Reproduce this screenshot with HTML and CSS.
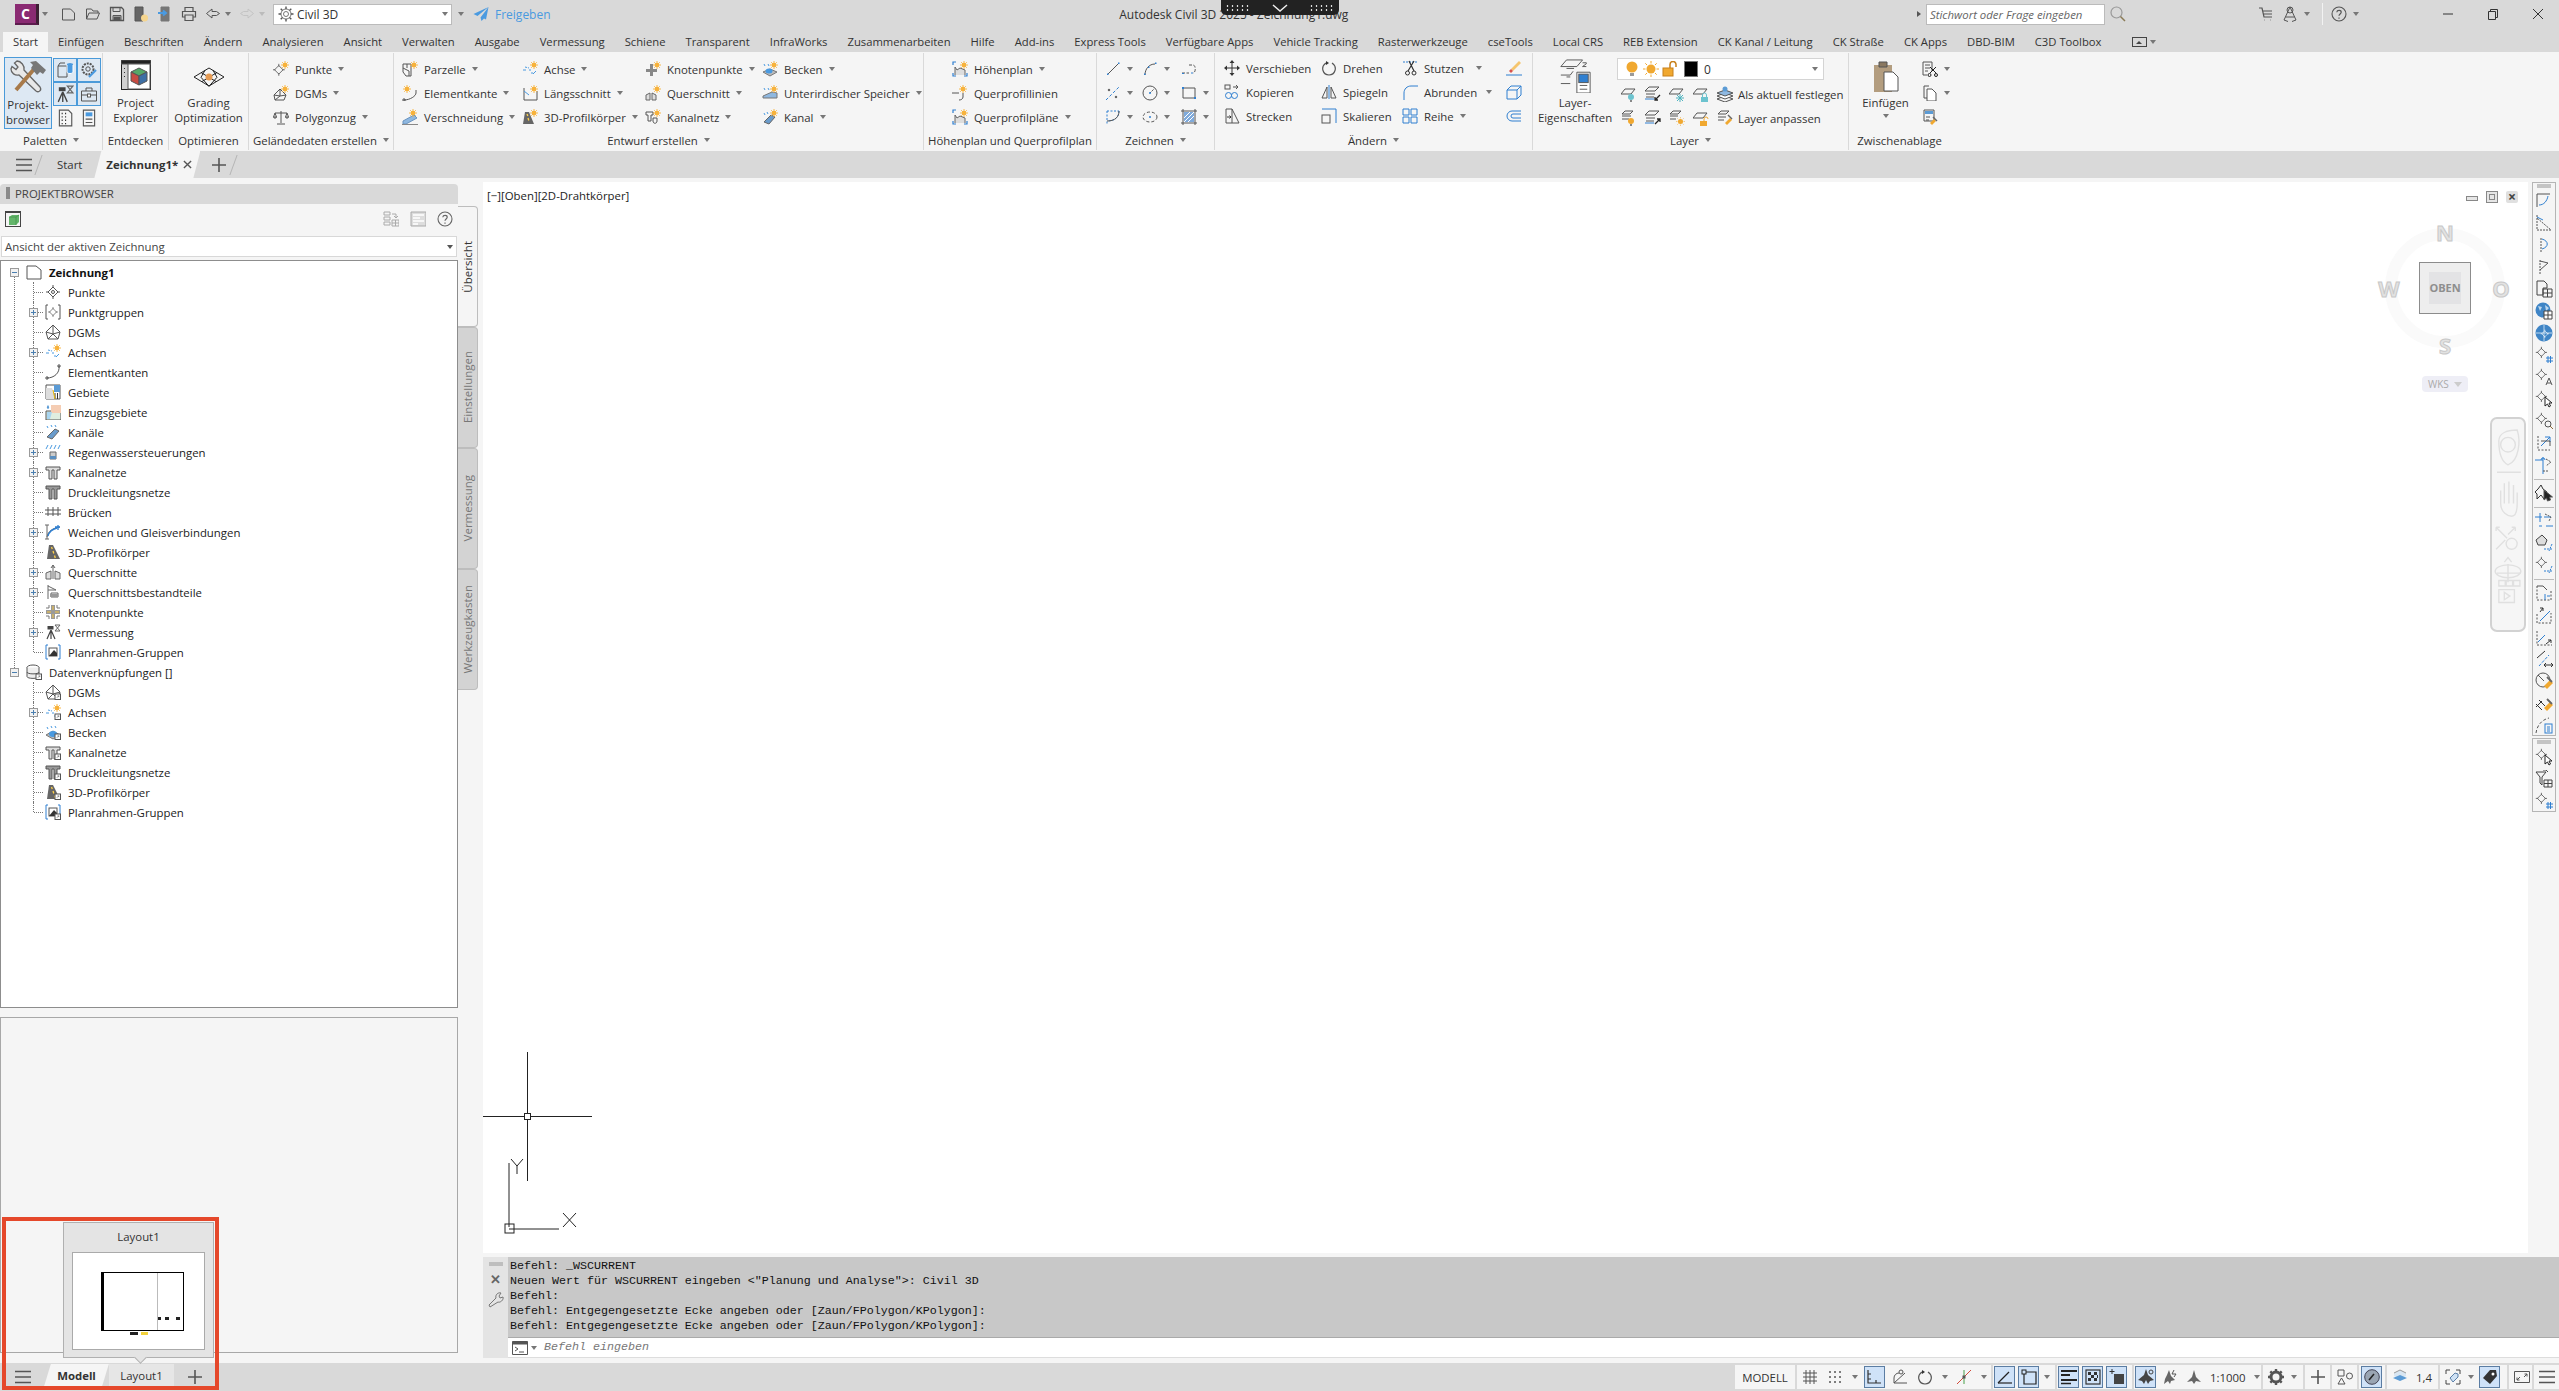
FILE: index.html
```html
<!DOCTYPE html>
<html lang="de">
<head>
    <meta charset="UTF-8">
    <title>Autodesk Civil 3D</title>
    <link rel="stylesheet" href="styles.css">
</head>
<body>
<svg class="sprite" xmlns="http://www.w3.org/2000/svg">
  <defs>
    <g id="st"><circle cx="12" cy="4" r="2.2" fill="#f7b23b" stroke="none"/><path d="M12 0v8M8 4h8M9.2 1.2l5.6 5.6M14.8 1.2l-5.6 5.6" stroke="#f7b23b" stroke-width=".9"/></g>
    <g id="lk"><rect x="10" y="10" width="5.5" height="5.5" fill="#fff" stroke="#555"/><path d="M11.8 13.8l2-2M12.5 11.8h1.3v1.3" stroke="#555" stroke-width=".6"/></g>
    <path id="tgt" d="M8 1v3M8 12v3M1 8h3M12 8h3M8 3l5 5-5 5-5-5z"/>
    <symbol id="new" viewBox="0 0 16 16"><path d="M1.5 3h8l4 4v7h-12z"/></symbol>
    <symbol id="open" viewBox="0 0 16 16"><path d="M1.5 13V3h5l1.5 2h5v2M1.5 13l2.5-6h10.5l-2.5 6z"/></symbol>
    <symbol id="save" viewBox="0 0 16 16"><path d="M1.5 1.5h11l2 2v11h-13z" stroke-width="1.3"/><path d="M4 1.5v4h7v-4M4 14.5v-5h8v5"/><rect x="5" y="11" width="6" height="3.5" fill="#555"/></symbol>
    <symbol id="saveas" viewBox="0 0 16 16"><path d="M2 1h8v14H2z" fill="#666"/><circle cx="11.5" cy="12" r="3.5" fill="#f5d58e" stroke="none"/></symbol>
    <symbol id="recv" viewBox="0 0 16 16"><path d="M4 1h8v14H4z" fill="#777" stroke="#777"/><path d="M1 7h7M6 4.5L9 7 6 9.5" stroke="#4a9ae0" stroke-width="2"/></symbol>
    <symbol id="print" viewBox="0 0 16 16"><path d="M4 5V1.5h8V5M4 11H1.5V5.5h13V11H12M4 9h8v5.5H4z" stroke-width="1.2"/></symbol>
    <symbol id="undo" viewBox="0 0 16 16"><path d="M7 3L1.5 7.5 7 12V9.5h4.5l3-2-3-2H7z"/></symbol>
    <symbol id="redo" viewBox="0 0 16 16"><path d="M9 3l5.5 4.5L9 12V9.5H4.5l-3-2 3-2H9z" stroke="#c4c4c4"/></symbol>
    <symbol id="gear" viewBox="0 0 16 16"><circle cx="8" cy="8" r="2.5"/><circle cx="8" cy="8" r="5"/><path d="M8 .5V3M8 13v2.5M.5 8H3M13 8h2.5M2.7 2.7l1.8 1.8M11.5 11.5l1.8 1.8M2.7 13.3l1.8-1.8M11.5 4.5l1.8-1.8" stroke-width="1.4"/></symbol>
    <symbol id="send" viewBox="0 0 16 16"><path d="M15.5 1L.5 8l4 2 11-9-8 10.5 1 3.5 2.5-2.5 2 1z" fill="#4a9ae0" stroke="none"/></symbol>
    <symbol id="search" viewBox="0 0 16 16"><circle cx="6.5" cy="6.5" r="5.5" stroke="#999" stroke-width="1.2"/><path d="M10.5 10.5l4.5 4.5" stroke="#8a7a55" stroke-width="1.5"/></symbol>
    <symbol id="cart" viewBox="0 0 16 16"><path d="M1 2h3l2 9h8M5 5h9M5.5 8h8.5M6 14h.5M12 14h.5" stroke-width="1.2"/></symbol>
    <symbol id="user" viewBox="0 0 16 16"><circle cx="8" cy="4" r="3"/><path d="M8 1L2 14l4 1.5M8 1l6 13-4 1.5M3.5 11h9"/></symbol>
    <symbol id="help" viewBox="0 0 16 16"><circle cx="8" cy="8" r="7" stroke-width="1.1"/><path d="M5.8 6.2C6 3.8 10.2 3.8 10.2 6.2c0 1.7-2.2 1.8-2.2 3.6M8 11.5v1.3" stroke-width="1.2"/></symbol>
    <symbol id="hammer" viewBox="0 0 36 36"><path d="M7 2l-2.5 2 3.5 4-2 2.5-4-3L1 10c0 4 4 7 8 6l17 16c3 2 6-1 4-4L14 11C15 7 11 2 7 2z" fill="#e8e8e8" stroke="#666" stroke-width="1.3"/><path d="M6 31L25 9" stroke="#a87a4a" stroke-width="4"/><path d="M20 3l6-1 10 9-3 4-3-2-3 3-6-7 2-3z" fill="#777" stroke="none"/></symbol>
    <symbol id="dbsheet" viewBox="0 0 18 18"><path d="M2 5h9v11H2zM2 5l2-3h5" stroke="#555"/><ellipse cx="14" cy="3.5" rx="3" ry="1.5" fill="#4a9ae0" stroke="none"/><path d="M11 4v7c0 2 6 2 6 0V4" fill="#4a9ae0" stroke="#fff"/></symbol>
    <symbol id="gearw" viewBox="0 0 18 18"><circle cx="8" cy="8" r="5.5" stroke="#555" stroke-dasharray="2 1" stroke-width="2"/><circle cx="8" cy="8" r="2.2" stroke="#555"/><path d="M9 16l7-7" stroke="#4a9ae0" stroke-width="2.2"/></symbol>
    <symbol id="survey" viewBox="0 0 16 16"><path d="M6 6l-4 9M6 6v9M6 6l4 9" stroke="#444" stroke-width="1.2"/><rect x="2.5" y="2" width="6" height="3.5" fill="#444" stroke="none"/><path d="M10 1h5l-5 6h5z" stroke="#666"/></symbol>
    <symbol id="toolbox" viewBox="0 0 18 18"><path d="M1.5 6h15v10h-15zM6 6V3h6v3M1.5 10h15"/><rect x="7.5" y="9" width="3" height="3" fill="#fff" stroke="#555"/></symbol>
    <symbol id="calcs" viewBox="0 0 16 16"><path d="M3 1h8l3 3v11H3z"/><path d="M5 4h1M8 4h1M5 7h1M8 7h1M5 10h1M8 10h1M5 13h1M8 13h1" stroke="#333" stroke-width="1.3"/></symbol>
    <symbol id="propsm" viewBox="0 0 16 16"><path d="M3 1h10v14H3z"/><rect x="5" y="3" width="6" height="3.5" fill="#4a9ae0" stroke="none"/><path d="M5 9h6M5 12h6"/></symbol>
    <symbol id="explorer" viewBox="0 0 30 30"><rect x=".5" y=".5" width="29" height="29" fill="#d0d0d0" stroke="#222"/><rect x="0" y="0" width="30" height="4" fill="#222"/><rect x="7" y="4" width="22" height="25" fill="#fff"/><path d="M18 8l8 4-8 4-8-4z" fill="#55a868"/><path d="M10 12l8 4v9l-8-4z" fill="#c84b42"/><path d="M26 12l-8 4v9l8-4z" fill="#3d6fa5"/><path d="M3.5 8v1M3.5 12v1M3.5 16v1" stroke="#333"/></symbol>
    <symbol id="grading" viewBox="0 0 32 20"><path d="M16 1l15 9-15 9L1 10zM8 5.5l15 9M24 5.5l-15 9M12 3.3l-4 7 8 9M20 3.3l4 7-8 9" stroke="#222"/><circle cx="16" cy="10" r="3.5" fill="#e59a52" stroke="none"/></symbol>
    <symbol id="greenbox" viewBox="0 0 16 16"><rect x=".5" y=".5" width="15" height="15" fill="#f5f5f5" stroke="#444"/><path d="M.5 1h15" stroke="#444" stroke-width="2"/><path d="M4 6l3-2h7v7l-3 3H4z" fill="#63b56a" stroke="none"/><path d="M4 6h7v8M11 6l3-2" stroke="#3f8f48" stroke-width=".7"/></symbol>
    <symbol id="punkte" viewBox="0 0 16 16"><use href="#tgt"/><circle cx="8" cy="8" r="1.5"/></symbol>
    <symbol id="punktnew" viewBox="0 0 16 16"><use href="#tgt" transform="translate(-1 2) scale(.85)"/><use href="#st"/></symbol>
    <symbol id="ptgroup" viewBox="0 0 16 16"><path d="M3 1H1v14h2M13 1h2v14h-2"/><use href="#tgt" transform="translate(2.4 2.4) scale(.7)"/></symbol>
    <symbol id="dgm" viewBox="0 0 16 16"><path d="M8 1l7 7-2 7H3L1 8zM1 8l7 2 7-2M8 1v9l-5 5M8 10l5 5"/></symbol>
    <symbol id="dgmnew" viewBox="0 0 16 16"><path d="M7 4l6 6-2 5H2L1 10zM1 10l6 1 6-1M7 4v7l-5 4"/><use href="#st"/></symbol>
    <symbol id="scale" viewBox="0 0 16 16"><path d="M8 2v12M4 15h8M2 4h12M2 4L.5 8h3zM14 4l-1.5 4h3zM.5 8c0 1.5 3 1.5 3 0M12.5 8c0 1.5 3 1.5 3 0"/></symbol>
    <symbol id="parzelle" viewBox="0 0 16 16"><path d="M1 3h8v12H4L1 11zM1 7l6 3v5M5 3v4"/><use href="#st"/></symbol>
    <symbol id="achse" viewBox="0 0 16 16"><path d="M1 9h3M7 9h2M11 13l3-3" stroke="#4a9ae0"/><path d="M3 6l4 1M9 12h2" stroke="#4a9ae0" stroke-dasharray="2 1"/><use href="#st"/></symbol>
    <symbol id="ekante" viewBox="0 0 16 16"><path d="M14 2c1 7-5 12-12 12M14 0v4M0 14h4M2 12v4M12 2h4"/></symbol>
    <symbol id="ekantenew" viewBox="0 0 16 16"><path d="M14 8c0 3-6 7-12 7M0 15h4M2 13v3M14 8V5"/><use href="#st" transform="translate(-7 0)"/></symbol>
    <symbol id="lschnitt" viewBox="0 0 16 16"><path d="M2 3v12h13V6" stroke="#555"/><path d="M2 6l5 4" stroke="#4a9ae0"/><use href="#st"/></symbol>
    <symbol id="versch" viewBox="0 0 16 16"><path d="M1 12l11-6 3 3L4 15H1z" fill="#8fb8e0" stroke="#6a94c0"/><path d="M0 15.5h16" stroke="#888"/><use href="#st" transform="translate(-1 0)"/></symbol>
    <symbol id="road" viewBox="0 0 16 16"><path d="M4 1h4l7 14H2z" fill="#666" stroke="none"/><path d="M6.5 3l.8 2M8 7l.8 2.5M9.5 11.5l.8 2.5" stroke="#ffd24a" stroke-width="1.3"/></symbol>
    <symbol id="roadnew" viewBox="0 0 16 16"><path d="M3 3h4l5 12H1z" fill="#666" stroke="none"/><path d="M5 5l.8 2M6 9l.8 2.5" stroke="#ffd24a" stroke-width="1.3"/><use href="#st"/></symbol>
    <symbol id="knoten" viewBox="0 0 16 16"><path d="M6 1v5H1v4h5v5h4v-5h5V6h-5V1z" fill="#999" stroke="none"/><path d="M8 2v4M8 10v4M2 8h4M10 8h4" stroke="#f5c542"/><path d="M1 4h3M12 4h3M1 12h3M12 12h3M4 1v3M12 1v3M4 12v3M12 12v3" stroke="#777"/></symbol>
    <symbol id="knotennew" viewBox="0 0 16 16"><path d="M5 3v5H1v3h4v4h3v-4h4V8H8V3z" fill="#888" stroke="none"/><use href="#st"/></symbol>
    <symbol id="quers" viewBox="0 0 16 16"><path d="M1 9l5-2v8H1zM15 9l-5-2v8h5zM6 4l2-3 2 3M8 1v14" fill="#ddd" stroke="#666"/></symbol>
    <symbol id="quersnew" viewBox="0 0 16 16"><path d="M1 10l4-2v7H1zM11 10l-4-2v7h4z" fill="#ddd" stroke="#666"/><use href="#st"/></symbol>
    <symbol id="querb" viewBox="0 0 16 16"><path d="M3 1v14M3 2l8 4H3M6 9h7v4H6z" stroke="#666"/><rect x="5" y="10" width="8" height="3" fill="#999" stroke="none"/></symbol>
    <symbol id="netz" viewBox="0 0 16 16"><path d="M1 3h14v3h-3v9H9V6H7v9H4V6H1z" stroke="#555" fill="#ddd"/></symbol>
    <symbol id="netzdk" viewBox="0 0 16 16"><path d="M1 2h14v3h-3v10H9V5H7v10H4V5H1z" stroke="#555" fill="#999"/></symbol>
    <symbol id="netznew" viewBox="0 0 16 16"><path d="M1 3h7v3H6v6H3V6H1zM8 9h4v3c0 3-4 3-4 0z" stroke="#555"/><use href="#st"/></symbol>
    <symbol id="becken" viewBox="0 0 16 16"><path d="M1 11l7-4 7 4-7 4z" fill="#bbb" stroke="#777"/><ellipse cx="8" cy="10" rx="4" ry="3" fill="#4a9ae0" stroke="none"/><path d="M2 3l1 2M6 2l1 2M10 2l1 2" stroke="#4a9ae0"/></symbol>
    <symbol id="beckennew" viewBox="0 0 16 16"><path d="M1 11l7-3 7 3-7 4z" fill="#bbb" stroke="#777"/><ellipse cx="7" cy="10" rx="3.5" ry="2.5" fill="#4a9ae0" stroke="none"/><path d="M2 3l1 2M6 3l1 2" stroke="#4a9ae0"/><use href="#st"/></symbol>
    <symbol id="speicher" viewBox="0 0 16 16"><path d="M1 11l9-4 5 1v5H1z" fill="#8fb8e0" stroke="#777"/><path d="M2 3l1 2M6 3l1 2" stroke="#4a9ae0"/><use href="#st"/></symbol>
    <symbol id="kanal" viewBox="0 0 16 16"><path d="M2 13l8-8 4 2-7 8z" fill="#6a9ccc" stroke="#666"/><path d="M2 2l1 2M6 1l1 2M10 1l1 2" stroke="#4a9ae0"/></symbol>
    <symbol id="kanalnew" viewBox="0 0 16 16"><path d="M2 13l7-7 4 2-6 7z" fill="#6a9ccc" stroke="#666"/><path d="M2 4l1 2M5 3l1 2" stroke="#4a9ae0"/><use href="#st"/></symbol>
    <symbol id="gebiet" viewBox="0 0 16 16"><path d="M1 1h14v14H1z" stroke="#555"/><path d="M9 1h6v7H9z" fill="#5b9bd5" stroke="none"/><path d="M1 4h6l4 11H1z" fill="#ddd" stroke="none"/><path d="M10 9v6M12.5 9v6" stroke="#333"/><path d="M8 6l2 9" stroke="#e6b800"/></symbol>
    <symbol id="einzug" viewBox="0 0 16 16"><path d="M1 7h15v9H1z" fill="#dfeee0"/><path d="M6 1h10v8H6z" fill="#f5cdb3" stroke="none"/><path d="M3 1c-4 5 4 5 0 0z" fill="#5b9bd5" stroke="none"/><path d="M2 8h5l-2 7H2z" fill="#a8d5f0" stroke="none"/></symbol>
    <symbol id="regen" viewBox="0 0 16 16"><path d="M2 3L1 5M6 3L5 5M10 3L9 5M14 3l-1 2M3 1L2 3M7 1L6 3M11 1l-1 2M15 1l-1 2" stroke="#4a9ae0"/><path d="M5 8h6v7H5z" fill="#ccc" stroke="#666"/><path d="M5 12h6v3H5z" fill="#5b8fc0" stroke="none"/></symbol>
    <symbol id="bruecke" viewBox="0 0 16 16"><path d="M0 6h16M0 10h16M3 3v9M8 3v9M13 3v9" stroke="#555"/></symbol>
    <symbol id="weiche" viewBox="0 0 16 16"><path d="M2 1v14M0 15h4M0 1h4M2 13C3 7 8 4 15 3" stroke="#666"/><path d="M3 12c1-4 5-7 9-8M13 1v5M10 3h5" stroke="#2f7fd0" stroke-width="1.3"/></symbol>
    <symbol id="plan" viewBox="0 0 16 16"><path d="M3 1H1v14h2M13 1h2v14h-2" stroke="#2f7fd0"/><rect x="4" y="4" width="8" height="8" stroke="#555"/><path d="M4 12l5-6 3 3v3z" fill="#333" stroke="none"/></symbol>
    <symbol id="doc" viewBox="0 0 16 16"><path d="M1 2h9l5 4v9H1z" fill="#fff" stroke="#555"/></symbol>
    <symbol id="db" viewBox="0 0 16 16"><ellipse cx="7" cy="3.5" rx="6" ry="2.5" fill="#fff"/><path d="M1 3.5v9c0 2.5 12 2.5 12 0v-9M1 8c0 2.5 12 2.5 12 0" fill="#eee"/><use href="#lk"/></symbol>
    <symbol id="hoehe" viewBox="0 0 16 16"><path d="M1 4V1h3M15 12v3h-3M4 15H1v-3" stroke="#2f7fd0" stroke-width="1.2"/><path d="M3 14V6l2 3 3-2 5 2v5" fill="#ddd" stroke="#666"/><use href="#st"/></symbol>
    <symbol id="qlinie" viewBox="0 0 16 16"><path d="M0 8h7M11 8v4c0 2-2 3-4 3" stroke="#555"/><use href="#st" transform="translate(-1 0)"/></symbol>
    <symbol id="line" viewBox="0 0 16 16"><path d="M3 13L13 3" stroke="#555"/><path d="M2 14h1.5v-1.5H2zM13 3h1.5V1.5H13z" fill="#2f7fd0" stroke="none"/></symbol>
    <symbol id="arc" viewBox="0 0 16 16"><path d="M3 14C3 8 7 3 13 3" stroke="#555"/><path d="M2 14h1.5v-1.5H2zM13 3h1.5V1.5H13zM6 7h1.5V5.5H6z" fill="#2f7fd0" stroke="none"/></symbol>
    <symbol id="dash" viewBox="0 0 16 16"><path d="M1 12h7M8 4h4c3 0 3 8 0 8" stroke="#555" stroke-dasharray="3 1.5"/><path d="M1 12.5h2M10 12h2" stroke="#2f7fd0"/></symbol>
    <symbol id="dline" viewBox="0 0 16 16"><path d="M1 15L15 1" stroke="#2f7fd0" stroke-dasharray="3 2"/><circle cx="4" cy="5" r=".8" fill="#555"/><circle cx="11" cy="12" r=".8" fill="#555"/></symbol>
    <symbol id="circle" viewBox="0 0 16 16"><circle cx="8" cy="8" r="7" stroke="#555"/><path d="M8 8l4-4" stroke="#555" stroke-dasharray="2 1"/><circle cx="8" cy="8" r="1" fill="#2f7fd0" stroke="none"/></symbol>
    <symbol id="rect" viewBox="0 0 16 16"><path d="M2 3h12v10H2z" stroke="#555"/><path d="M1 2h2v2H1zM13 12h2v2h-2z" fill="#2f7fd0" stroke="none"/></symbol>
    <symbol id="fspline" viewBox="0 0 16 16"><path d="M2 2h12M2 2v13M14 2c0 6-4 10-12 10" stroke="#2f7fd0" stroke-dasharray="2 1.5"/><path d="M14 2c0 6-4 10-12 10" stroke="#555"/></symbol>
    <symbol id="ell" viewBox="0 0 16 16"><ellipse cx="8" cy="8" rx="7" ry="5" stroke="#555" stroke-dasharray="3 2"/><circle cx="8" cy="8" r="1" fill="#2f7fd0" stroke="none"/></symbol>
    <symbol id="hatch" viewBox="0 0 16 16"><path d="M2 0v16M14 0v16M0 2h16M0 14h16" stroke="#555"/><path d="M3 3h10v10H3z" fill="#7faadb" stroke="none"/><path d="M3 9l6-6M3 13L13 3M7 13l6-6" stroke="#fff"/></symbol>
    <symbol id="move" viewBox="0 0 16 16"><path d="M8 0l2.5 3h-5zM8 16l2.5-3h-5zM0 8l3-2.5v5zM16 8l-3-2.5v5zM3 7.5h10v1H3zM7.5 3h1v10h-1z" fill="#333" stroke="none"/></symbol>
    <symbol id="copy" viewBox="0 0 16 16"><rect x="1" y="1" width="5" height="4" stroke="#555"/><path d="M9 3h5M12 1l2 2-2 2" stroke="#555"/><circle cx="4.5" cy="11.5" r="3" stroke="#2f7fd0"/><circle cx="10.5" cy="11.5" r="3" stroke="#2f7fd0"/></symbol>
    <symbol id="stretch" viewBox="0 0 16 16"><path d="M2 1v14h6V1zM8 1l7 14H8" stroke="#555"/><path d="M3 9h4M5.5 7.5L7 9l-1.500 1.500" stroke="#333"/></symbol>
    <symbol id="rot" viewBox="0 0 16 16"><path d="M5 3C-1 7 2 15 8 15s9-8 3-12" stroke="#555" stroke-width="1.2"/><path d="M5 1v4l3-2z" fill="#333" stroke="none"/></symbol>
    <symbol id="mirror" viewBox="0 0 16 16"><path d="M6 3L1 14h5zM10 3l5 11h-5z" stroke="#555"/><path d="M8 1v14" stroke="#2f7fd0"/></symbol>
    <symbol id="scl" viewBox="0 0 16 16"><path d="M1 1h14v14" stroke="#2f7fd0"/><rect x="1" y="7" width="8" height="8" stroke="#555"/></symbol>
    <symbol id="trim" viewBox="0 0 16 16"><path d="M1 2h14" stroke="#2f7fd0" stroke-dasharray="2 1"/><path d="M7 1l5 10M12 1L6 11" stroke="#333" stroke-width="1.2"/><circle cx="5.5" cy="13" r="2" stroke="#333"/><circle cx="12" cy="13" r="2" stroke="#333"/></symbol>
    <symbol id="fillet" viewBox="0 0 16 16"><path d="M2 16V9c0-4 3-7 7-7h7" stroke="#2f7fd0"/></symbol>
    <symbol id="array" viewBox="0 0 16 16"><path d="M1 1h6v6H1zM9 1h6v6H9zM1 9h6v6H1zM9 9h6v6H9z" stroke="#2f7fd0"/></symbol>
    <symbol id="erase" viewBox="0 0 16 16"><path d="M5 9l8-8 2 2-8 8z" fill="#f5c56e" stroke="none"/><path d="M3 11l2-2 2 2-2 2z" fill="#d9534f" stroke="none"/><path d="M0 15h16" stroke="#2f7fd0"/></symbol>
    <symbol id="box3d" viewBox="0 0 16 16"><path d="M1 6h10v9H1zM1 6l4-4h10v9l-4 4M11 6l4-4" stroke="#2f7fd0"/></symbol>
    <symbol id="offset" viewBox="0 0 16 16"><path d="M15 3H6a5 5 0 000 10h9M15 6H7a2 2 0 000 4h8" stroke="#2f7fd0"/></symbol>
    <symbol id="layers" viewBox="0 0 36 36"><path d="M9 1h17l-6 7H3zM9 10h8M3 17h10l3-4M9 19h4M3 26h10" stroke="#555"/><path d="M20 14h14v22H20z" fill="#fff" stroke="#555"/><rect x="22" y="16" width="10" height="9" fill="#2f7fd0"/><path d="M23 28h8M23 32h8" stroke="#555"/><path d="M26 4h4v1l-4 3h4" stroke="#555"/></symbol>
    <symbol id="paste" viewBox="0 0 26 32"><path d="M1 5h18v27H1z" fill="#b39d7f" stroke="none"/><path d="M6 2h8v5H6z" fill="#8a7860"/><path d="M11 12h9l5 5v14H11z" fill="#fff" stroke="#555"/></symbol>
    <symbol id="bulb" viewBox="0 0 16 16"><circle cx="8" cy="6" r="5.5" fill="#f0a830" stroke="none"/><path d="M6 12h4v3H6z" fill="#9a9a9a" stroke="none"/></symbol>
    <symbol id="sun" viewBox="0 0 16 16"><circle cx="8" cy="8" r="4.5" fill="#f0a830" stroke="none"/><path d="M8 0v2.5M8 13.5V16M0 8h2.5M13.5 8H16M2.3 2.3L4 4M12 12l1.700 1.700M2.300 13.700L4 12M12 4l1.700-1.700" stroke="#f0a830"/></symbol>
    <symbol id="unlock" viewBox="0 0 16 16"><rect x="1" y="7" width="10" height="8" fill="#f0a830" stroke="#c8801a"/><path d="M8 7V3.500a3 3 0 016 0V6" stroke="#c8801a" stroke-width="1.5"/></symbol>
    <symbol id="lay1" viewBox="0 0 16 16"><path d="M4 3h10l-4 5H0z" stroke="#555"/><circle cx="10" cy="11" r="3" fill="#6cc3cf" stroke="none"/><path d="M9 14h2v2H9z" fill="#888" stroke="none"/></symbol>
    <symbol id="lay2" viewBox="0 0 16 16"><path d="M4 1h10l-4 4H0zM1 8h9M1 11h8" stroke="#555"/><path d="M0 13h9" stroke="#2f7fd0"/><path d="M15 9l-5 5M10 11v3h3" stroke="#222" stroke-width="1.3"/></symbol>
    <symbol id="lay3" viewBox="0 0 16 16"><path d="M4 3h10l-4 5H0z" stroke="#555"/><path d="M11 8v8M7 12h8M8 9l6 6M14 9l-6 6" stroke="#4fb3bf"/></symbol>
    <symbol id="lay4" viewBox="0 0 16 16"><path d="M4 3h10l-4 5H0z" stroke="#555"/><rect x="8" y="11" width="7" height="5" fill="#6cc3cf" stroke="none"/><path d="M9.5 11V9a2 2 0 014 0v2" stroke="#6cc3cf"/></symbol>
    <symbol id="lay5" viewBox="0 0 16 16"><path d="M0 13l8-3 8 3-8 3z" stroke="#555"/><path d="M0 10l8-3 8 3-8 3z" fill="#fff" stroke="#555"/><path d="M0 7l8-3 8 3-8 3z" fill="#8fb8e0" stroke="#555"/><circle cx="8" cy="3" r="2.5" fill="#5b9bd5" stroke="none"/></symbol>
    <symbol id="lay6" viewBox="0 0 16 16"><path d="M4 1h8L9 4H1zM1 6h9M1 9h7" stroke="#555"/><circle cx="10" cy="11" r="3" fill="#f0a830" stroke="none"/><path d="M9 14h2v2H9z" fill="#888" stroke="none"/></symbol>
    <symbol id="lay7" viewBox="0 0 16 16"><path d="M4 1h10l-4 4H0zM1 8h9M1 11h8" stroke="#555"/><path d="M0 13h9" stroke="#2f7fd0"/><path d="M10 14l5-5M12 9h3v3" stroke="#222" stroke-width="1.3"/></symbol>
    <symbol id="lay8" viewBox="0 0 16 16"><path d="M4 1h8L9 4H1zM1 6h8M1 9h6" stroke="#555"/><use href="#sun" x="7" y="7" width="9" height="9"/></symbol>
    <symbol id="lay9" viewBox="0 0 16 16"><path d="M4 3h10l-4 5H0z" stroke="#555"/><rect x="7" y="11" width="7" height="5" fill="#f0a830" stroke="none"/><path d="M11 11V9a2 2 0 014 0" stroke="#f0a830"/></symbol>
    <symbol id="lay10" viewBox="0 0 16 16"><path d="M4 1h8L9 4H1zM1 7h8M1 10h6" stroke="#555"/><path d="M8 13l5-5 2 2-5 5z" fill="#f0a830" stroke="none"/><path d="M11 5l4 4" stroke="#666" stroke-width="1.5"/></symbol>
    <symbol id="cut" viewBox="0 0 16 16"><path d="M1 1h9v9M3 4h5M3 7h5M3 10h3M1 1v13h4" stroke="#555"/><path d="M8 6l6 6M14 6l-6 6" stroke="#222"/><circle cx="7.5" cy="14" r="1.5" stroke="#222"/><circle cx="14" cy="14" r="1.5" stroke="#222"/></symbol>
    <symbol id="pcopy" viewBox="0 0 16 16"><path d="M7 1H2v12h3" stroke="#555"/><path d="M5 4h5l4 4v8H5z" fill="#fff" stroke="#555"/></symbol>
    <symbol id="pprop" viewBox="0 0 16 16"><path d="M2 1h10v11H2z" stroke="#555"/><rect x="3" y="2" width="8" height="3" fill="#5b9bd5" stroke="none"/><path d="M4 8h4M4 11h3" stroke="#555"/><path d="M8 14l4-4 2 2-4 4z" fill="#f0a830" stroke="none"/><path d="M11 8l4 4" stroke="#666" stroke-width="1.5"/></symbol>
    <symbol id="mgr" viewBox="0 0 16 16"><path d="M1 1h6v3H1zM1 6h6v3H1zM1 11h6v3H1z"/><path d="M9 3h4v4M11 5l2 2 2-2"/><path d="M9 9h7v6H9zM12.5 9v6M9 12h7"/></symbol>
    <symbol id="prop" viewBox="0 0 16 16"><path d="M1 1h15v14H1z" fill="#ddd" stroke="#aaa"/><path d="M3 4h11M3 7h7M3 10h11M3 13h5" stroke="#fff" stroke-width="1.5"/></symbol>
    <symbol id="term" viewBox="0 0 16 16"><path d="M.5 1.5h15v13H.5z" stroke="#555"/><path d="M.5 1.500h15v3H.5z" fill="#555" stroke="none"/><path d="M3 7l3 2-3 2M7 12h5" stroke="#555"/></symbol>
    <symbol id="wrench" viewBox="0 0 16 16"><path d="M2 15l-1-2 7-7c-1-3 2-6 5-5l-2 3 1 2 3-1c1 3-3 6-5 5z" stroke="#777"/></symbol>
    <symbol id="menu" viewBox="0 0 16 16"><path d="M0 2.500h16M0 8h16M0 13.500h16" stroke="#555" stroke-width="1.6"/></symbol>
    <symbol id="plus" viewBox="0 0 16 16"><path d="M8 1v14M1 8h14" stroke="#555" stroke-width="1.6"/></symbol>
    <symbol id="grid" viewBox="0 0 16 16"><path d="M1 4h14M1 8h14M1 12h14M4 1v14M8 1v14M12 1v14" stroke="#555"/></symbol>
    <symbol id="snapg" viewBox="0 0 16 16"><path d="M2 3h2M7 3h2M12 3h2M2 8h2M7 8h2M12 8h2M2 13h2M7 13h2M12 13h2" stroke="#555" stroke-width="1.5"/></symbol>
    <symbol id="ortho" viewBox="0 0 16 16"><path d="M2 1v13h13M2 5h3M2 10h3M10 14v-3" stroke="#333" stroke-width="1.2"/></symbol>
    <symbol id="polar" viewBox="0 0 16 16"><path d="M2 14h13M2 14L13 4M2 14V9a5 5 0 015-5" stroke="#555"/><circle cx="9" cy="3" r="2" stroke="#555"/></symbol>
    <symbol id="iso" viewBox="0 0 16 16"><path d="M1 15L15 1" stroke="#d14b3a"/><path d="M8 1v14" stroke="#4aa04a"/><rect x="6.5" y="6.5" width="3" height="3" fill="#555" stroke="none"/></symbol>
    <symbol id="osnap" viewBox="0 0 16 16"><path d="M1 14h14" stroke="#222" stroke-width="1.2"/><path d="M1 14L12 3" stroke="#222" stroke-width="1.2"/></symbol>
    <symbol id="otrack" viewBox="0 0 16 16"><rect x="1" y="1" width="4" height="4" stroke="#222"/><path d="M5 3h10v12H3V5" stroke="#222" stroke-width="1.2"/></symbol>
    <symbol id="lweight" viewBox="0 0 16 16"><path d="M0 2h16M0 6h9M0 11h16" stroke="#222" stroke-width="2"/><path d="M0 14.5h10" stroke="#222" stroke-width="1.5"/></symbol>
    <symbol id="transp" viewBox="0 0 16 16"><rect x="1" y="1" width="14" height="14" stroke="#333" stroke-width="1.2"/><path d="M3 3h3v3H3zM9 3h3v3H9zM6 6h3v3H6zM12 6h1v3h-1zM3 9h3v3H3zM9 9h3v3H9z" fill="#333" stroke="none"/></symbol>
    <symbol id="selc" viewBox="0 0 16 16"><rect x="5" y="5" width="10" height="10" fill="#444" stroke="none"/><path d="M3 0v5M.5 2.500h5" stroke="#333"/></symbol>
    <symbol id="anno" viewBox="0 0 16 16"><path d="M8 0l2 6 6 5-4 1-2 3-2-4-2 4-2-3-4-1 6-5z" fill="#444" stroke="none"/><circle cx="13" cy="3" r="2" stroke="#444"/></symbol>
    <symbol id="anno2" viewBox="0 0 16 16"><path d="M7 1l2 6 4 4-4 1-1 3-2-3-4 3 1-5 2-4z" fill="#666" stroke="none"/><path d="M12 1l-2 4h4l-2 3" stroke="#555"/></symbol>
    <symbol id="anno3" viewBox="0 0 16 16"><path d="M8 1l2 7 5 5-5-1-2 3-2-3-5 1 5-5z" fill="#666" stroke="none"/></symbol>
    <symbol id="gearf" viewBox="0 0 16 16"><circle cx="8" cy="8" r="5" fill="none" stroke="#555" stroke-width="3"/><path d="M8 0v3M8 13v3M0 8h3M13 8h3M2.3 2.3l2 2M11.7 11.7l2 2M2.3 13.7l2-2M11.7 4.300l2-2" stroke="#555" stroke-width="2.4"/></symbol>
    <symbol id="shapes" viewBox="0 0 16 16"><path d="M1 1h6v6H1zM4.5 9L8 15H1z" stroke="#555"/><circle cx="12.5" cy="7" r="3" stroke="#555"/></symbol>
    <symbol id="dial" viewBox="0 0 16 16"><circle cx="8" cy="8" r="7.3" fill="#9aa5b3" stroke="#445"/><path d="M5 11l5-6" stroke="#222" stroke-width="1.5"/></symbol>
    <symbol id="isoplane" viewBox="0 0 16 16"><path d="M8 1l6 3v3l-6 3-6-3V4z" fill="#d8e6f2" stroke="none"/><path d="M8 6l7 3-7 3-7-3z" fill="#5b9bd5" stroke="none"/><path d="M8 1l6 3M8 1L2 4" stroke="#999"/></symbol>
    <symbol id="tagf" viewBox="0 0 16 16"><path d="M1 5V1h4M11 1h4v4M15 11v4h-4M5 15H1v-4" stroke="#444"/><path d="M5 9l5-5 3 1v3l-5 5z" fill="#cfe2f5" stroke="#5a7fa8"/></symbol>
    <symbol id="tagd" viewBox="0 0 16 16"><path d="M1 9l7-8h6l1 6-7 8z" fill="#333" stroke="none"/><circle cx="11" cy="5" r="1.5" fill="#fff" stroke="none"/></symbol>
    <symbol id="full" viewBox="0 0 16 16"><path d="M.5 2.500h15v11H.5z" stroke="#555"/><path d="M3 11l3-3M3 8.500V11h2.500M13 5l-3 3M13 7.500V5h-2.500" stroke="#555"/></symbol>
    <symbol id="tbpoly" viewBox="0 0 18 18"><path d="M2 15V2h13" stroke="#555"/><path d="M4 13c5 0 8-4 9-9" stroke="#2f7fd0"/></symbol>
    <symbol id="tbtri" viewBox="0 0 18 18"><path d="M2 1v15h14L2 4" stroke="#555" stroke-dasharray="2 1"/><path d="M2 3l6 3" stroke="#2f7fd0"/></symbol>
    <symbol id="tbarc" viewBox="0 0 18 18"><path d="M6 2v14" stroke="#555" stroke-dasharray="2 1"/><path d="M7 3c7 2 7 8 0 10" stroke="#2f7fd0"/></symbol>
    <symbol id="tbang" viewBox="0 0 18 18"><path d="M5 2v14" stroke="#555" stroke-dasharray="2 1"/><path d="M5 3l8 2M5 12l8-7" stroke="#555"/></symbol>
    <symbol id="tbtable" viewBox="0 0 18 18"><path d="M2 1h7l3 3v4H8v7H2zM8 9h9v8H8zM12.5 9v8M8 13h9" stroke="#444"/></symbol>
    <symbol id="globe" viewBox="0 0 18 18"><circle cx="8" cy="8" r="7.5" fill="#3f85c6" stroke="none"/><path d="M3 4l4 1-2 4zM10 3l4 3-3 3z" fill="#bcd7ee" stroke="none"/><path d="M9 9h8v8H9zM13 9v8M9 13h8" fill="#fff" stroke="#444"/></symbol>
    <symbol id="globe2" viewBox="0 0 18 18"><circle cx="9" cy="9" r="8.5" fill="#3f85c6" stroke="none"/><path d="M1 9h16M9 1v16" stroke="#bcd7ee"/><use href="#tgt" transform="translate(5 5) scale(.6)" stroke="#fff"/></symbol>
    <symbol id="pthash" viewBox="0 0 18 18"><use href="#tgt" transform="scale(.8)"/><path d="M13 10v7M15.5 10v7M11 12h7M11 15h7" stroke="#2f7fd0"/></symbol>
    <symbol id="pta" viewBox="0 0 18 18"><use href="#tgt" transform="scale(.8)"/><path d="M11 17l3-7 3 7M12 15h4" stroke="#555"/></symbol>
    <symbol id="ptcur" viewBox="0 0 18 18"><use href="#tgt" transform="scale(.8)"/><path d="M10 7v9l2.5-2 1.5 3 1.5-1-1.500-3h3z" fill="#fff" stroke="#222"/></symbol>
    <symbol id="ptzoom" viewBox="0 0 18 18"><use href="#tgt" transform="scale(.8)"/><circle cx="13" cy="12" r="3" stroke="#555"/><path d="M15 14l3 3" stroke="#8a6a3a"/></symbol>
    <symbol id="tbarrow" viewBox="0 0 18 18"><path d="M3 2v14h12" stroke="#555" stroke-dasharray="2 1.5"/><path d="M6 12l9-9M15 3v5M15 3h-5" stroke="#2f7fd0"/><path d="M6 7h9v5" stroke="#555"/></symbol>
    <symbol id="tbalign" viewBox="0 0 18 18"><path d="M0 4h8M8 1v17M6 4a1 1 0 014 0" stroke="#2f7fd0"/><path d="M11 3l5 3-5 4M8 15h6" stroke="#555" stroke-dasharray="2 1"/></symbol>
    <symbol id="tbcurs" viewBox="0 0 18 18"><path d="M6 1l2 4 4 3-2 2-1 5-3-4-4 4v-5L0 8l3-3z" stroke="#333"/><path d="M9 6v10l2.500-2 1 3 3-1-1-3h3z" fill="#222"/></symbol>
    <symbol id="tbalign2" viewBox="0 0 18 18"><path d="M0 5h7M5 1v9M9 5h7M4 14h3M11 14h7" stroke="#2f7fd0"/><path d="M10 2l6 3-2 4" stroke="#555" stroke-dasharray="2 1"/></symbol>
    <symbol id="tbtin" viewBox="0 0 18 18"><path d="M1 6l6-5 5 5-2 5H3z" fill="#ddd" stroke="#444"/><path d="M9 15h8M17 10l-3 7" stroke="#2f7fd0" stroke-dasharray="2 1"/></symbol>
    <symbol id="tbpt2" viewBox="0 0 18 18"><use href="#tgt" transform="scale(.8)"/><path d="M9 15h8M17 10l-3 7" stroke="#2f7fd0" stroke-dasharray="2 1"/></symbol>
    <symbol id="tbbox" viewBox="0 0 18 18"><path d="M2 2v14h14V7" stroke="#555" stroke-dasharray="2 1.5"/><path d="M2 2h6l4 4" stroke="#555"/><path d="M10 10v6M12 12h3" stroke="#2f7fd0"/></symbol>
    <symbol id="tbdiag" viewBox="0 0 18 18"><path d="M2 8v9h14V7" stroke="#555" stroke-dasharray="2 1.5"/><path d="M5 15L15 5" stroke="#2f7fd0"/><path d="M5 6l3-4M5 2h3v3" stroke="#333"/></symbol>
    <symbol id="tbdiag2" viewBox="0 0 18 18"><path d="M2 3v14h15" stroke="#555" stroke-dasharray="2 1.5"/><path d="M3 14l7-7" stroke="#2f7fd0"/><path d="M11 16l5-4M13 12h3v3" stroke="#333"/></symbol>
    <symbol id="tbdim" viewBox="0 0 18 18"><path d="M2 8l8-7" stroke="#333"/><path d="M4 16L14 5" stroke="#2f7fd0" stroke-dasharray="3 1.5"/><path d="M9 15h9M11 13l-2 2 2 2M16 13l2 2-2 2" stroke="#333"/></symbol>
    <symbol id="tbclock" viewBox="0 0 18 18"><circle cx="8" cy="8" r="7" stroke="#555"/><path d="M3 3l6 6" stroke="#555"/><path d="M9 14l6-6 3 3-6 6z" fill="#f0a830" stroke="none"/><path d="M12 5l5 5" stroke="#666" stroke-width="1.8"/></symbol>
    <symbol id="tbpen" viewBox="0 0 18 18"><path d="M1 10l6 6M1 13l6-6M4 6l6 6" stroke="#333"/><path d="M9 14l6-6 3 3-6 6z" fill="#f0a830" stroke="none"/><path d="M12 5l5 5" stroke="#666" stroke-width="1.8"/></symbol>
    <symbol id="tbcalc" viewBox="0 0 18 18"><path d="M1 17C2 10 6 4 14 2" stroke="#555" stroke-dasharray="3 2"/><rect x="10" y="8" width="7" height="9" stroke="#2f7fd0"/><path d="M12 11h3M12 13h3M12 15h3" stroke="#2f7fd0"/></symbol>
    <symbol id="tbfilter" viewBox="0 0 18 18"><path d="M1 2h10L7 7v8l-2-2V7zM8 0h3l2 2" stroke="#444"/><path d="M9 10h8v7H9zM13 10v7M9 13.5h8" stroke="#444"/></symbol>
  </defs>
</svg>

<header class="titlebar">
    <div class="app-btn">C</div><span class="dd dd-app"></span>
    <div class="qat">
        <svg class="ic"><use href="#new"/></svg>
        <svg class="ic"><use href="#open"/></svg>
        <svg class="ic"><use href="#save"/></svg>
        <svg class="ic"><use href="#saveas"/></svg>
        <svg class="ic"><use href="#recv"/></svg>
        <svg class="ic"><use href="#print"/></svg>
        <svg class="ic"><use href="#undo"/></svg><span class="dd"></span>
        <svg class="ic"><use href="#redo"/></svg><span class="dd dd-dim"></span>
    </div>
    <div class="workspace"><svg class="ic"><use href="#gear"/></svg><span class="workspace-name">Civil 3D</span><span class="dd"></span></div>
    <span class="dd dd-menu"></span>
    <svg class="ic share-ic"><use href="#send"/></svg><span class="share">Freigeben</span>
    <div class="doc-title">Autodesk Civil 3D 2025 - Zeichnung1.dwg</div>
    <span class="arrow-right"></span>
    <div class="search">Stichwort oder Frage eingeben</div>
    <svg class="ic search-ic"><use href="#search"/></svg>
    <svg class="ic cart-ic"><use href="#cart"/></svg>
    <svg class="ic"><use href="#user"/></svg><span class="dd"></span>
    <span class="title-sep"></span>
    <svg class="ic"><use href="#help"/></svg><span class="dd"></span>
    <div class="win-btns">
        <svg class="ic-win" viewBox="0 0 12 12"><path d="M1 6h10"/></svg>
        <svg class="ic-win" viewBox="0 0 12 12"><path d="M1.5 3.5h7v8h-7zM3.5 3.5v-2h7v8h-2"/></svg>
        <svg class="ic-win" viewBox="0 0 12 12"><path d="M1 1l10 10M11 1L1 11"/></svg>
    </div>
    <div class="remote-bar">
        <span class="remote-dots"></span>
        <svg class="remote-chev" viewBox="0 0 16 8"><path d="M1 1l7 6 7-6"/></svg>
        <span class="remote-dots"></span>
    </div>
</header>

<nav class="tabs">
    <span class="tab active">Start</span>
    <span class="tab">Einfügen</span>
    <span class="tab">Beschriften</span>
    <span class="tab">Ändern</span>
    <span class="tab">Analysieren</span>
    <span class="tab">Ansicht</span>
    <span class="tab">Verwalten</span>
    <span class="tab">Ausgabe</span>
    <span class="tab">Vermessung</span>
    <span class="tab">Schiene</span>
    <span class="tab">Transparent</span>
    <span class="tab">InfraWorks</span>
    <span class="tab">Zusammenarbeiten</span>
    <span class="tab">Hilfe</span>
    <span class="tab">Add-ins</span>
    <span class="tab">Express Tools</span>
    <span class="tab">Verfügbare Apps</span>
    <span class="tab">Vehicle Tracking</span>
    <span class="tab">Rasterwerkzeuge</span>
    <span class="tab">cseTools</span>
    <span class="tab">Local CRS</span>
    <span class="tab">REB Extension</span>
    <span class="tab">CK Kanal / Leitung</span>
    <span class="tab">CK Straße</span>
    <span class="tab">CK Apps</span>
    <span class="tab">DBD-BIM</span>
    <span class="tab">C3D Toolbox</span>
    <span class="tab-min"><i></i></span><span class="dd"></span>
</nav>

<section class="ribbon">
    <div class="panel p-paletten">
        <div class="panel-body">
            <div class="big big-on">
                <svg class="big-ic hammer-ic"><use href="#hammer"/></svg>
                <span>Projekt-<br>browser</span>
            </div>
            <div class="pal-grid">
                <span class="pal on"><svg class="ic-18"><use href="#dbsheet"/></svg></span>
                <span class="pal on"><svg class="ic-18"><use href="#gearw"/></svg></span>
                <span class="pal on"><svg class="ic-18"><use href="#survey"/></svg></span>
                <span class="pal on"><svg class="ic-18"><use href="#toolbox"/></svg></span>
                <span class="pal"><svg class="ic-18"><use href="#calcs"/></svg></span>
                <span class="pal"><svg class="ic-18"><use href="#propsm"/></svg></span>
            </div>
        </div>
        <div class="panel-label">Paletten<span class="dd"></span></div>
    </div>
    <div class="panel p-entdecken">
        <div class="panel-body">
            <div class="big big-full">
                <svg class="big-ic explorer-ic"><use href="#explorer"/></svg>
                <span>Project<br>Explorer</span>
            </div>
        </div>
        <div class="panel-label">Entdecken</div>
    </div>
    <div class="panel p-optimieren">
        <div class="panel-body">
            <div class="big big-full">
                <svg class="big-ic grading-ic"><use href="#grading"/></svg>
                <span>Grading<br>Optimization</span>
            </div>
        </div>
        <div class="panel-label">Optimieren</div>
    </div>
    <div class="panel p-gelaende">
        <div class="panel-body">
            <div class="col">
                <div class="item"><svg class="ic"><use href="#punktnew"/></svg>Punkte<span class="dd"></span></div>
                <div class="item"><svg class="ic"><use href="#dgmnew"/></svg>DGMs<span class="dd"></span></div>
                <div class="item"><svg class="ic"><use href="#scale"/></svg>Polygonzug<span class="dd"></span></div>
            </div>
        </div>
        <div class="panel-label">Geländedaten erstellen<span class="dd"></span></div>
    </div>
    <div class="panel p-entwurf">
        <div class="panel-body">
            <div class="col c-120">
                <div class="item"><svg class="ic"><use href="#parzelle"/></svg>Parzelle<span class="dd"></span></div>
                <div class="item"><svg class="ic"><use href="#ekantenew"/></svg>Elementkante<span class="dd"></span></div>
                <div class="item"><svg class="ic"><use href="#versch"/></svg>Verschneidung<span class="dd"></span></div>
            </div>
            <div class="col c-123">
                <div class="item"><svg class="ic"><use href="#achse"/></svg>Achse<span class="dd"></span></div>
                <div class="item"><svg class="ic"><use href="#lschnitt"/></svg>Längsschnitt<span class="dd"></span></div>
                <div class="item"><svg class="ic"><use href="#roadnew"/></svg>3D-Profilkörper<span class="dd"></span></div>
            </div>
            <div class="col c-117">
                <div class="item"><svg class="ic"><use href="#knotennew"/></svg>Knotenpunkte<span class="dd"></span></div>
                <div class="item"><svg class="ic"><use href="#quersnew"/></svg>Querschnitt<span class="dd"></span></div>
                <div class="item"><svg class="ic"><use href="#netznew"/></svg>Kanalnetz<span class="dd"></span></div>
            </div>
            <div class="col">
                <div class="item"><svg class="ic"><use href="#beckennew"/></svg>Becken<span class="dd"></span></div>
                <div class="item"><svg class="ic"><use href="#speicher"/></svg>Unterirdischer Speicher<span class="dd"></span></div>
                <div class="item"><svg class="ic"><use href="#kanalnew"/></svg>Kanal<span class="dd"></span></div>
            </div>
        </div>
        <div class="panel-label">Entwurf erstellen<span class="dd"></span></div>
    </div>
    <div class="panel p-hoehe">
        <div class="panel-body">
            <div class="col">
                <div class="item"><svg class="ic"><use href="#hoehe"/></svg>Höhenplan<span class="dd"></span></div>
                <div class="item"><svg class="ic"><use href="#qlinie"/></svg>Querprofillinien</div>
                <div class="item"><svg class="ic"><use href="#hoehe"/></svg>Querprofilpläne<span class="dd"></span></div>
            </div>
        </div>
        <div class="panel-label">Höhenplan und Querprofilplan</div>
    </div>
    <div class="panel p-zeichnen">
        <div class="panel-body">
            <div class="col c-37">
                <div class="item tool"><svg class="ic"><use href="#line"/></svg><span class="dd"></span></div>
                <div class="item tool"><svg class="ic"><use href="#dline"/></svg><span class="dd"></span></div>
                <div class="item tool"><svg class="ic"><use href="#fspline"/></svg><span class="dd"></span></div>
            </div>
            <div class="col c-39">
                <div class="item tool"><svg class="ic"><use href="#arc"/></svg><span class="dd"></span></div>
                <div class="item tool"><svg class="ic"><use href="#circle"/></svg><span class="dd"></span></div>
                <div class="item tool"><svg class="ic"><use href="#ell"/></svg><span class="dd"></span></div>
            </div>
            <div class="col">
                <div class="item tool"><svg class="ic"><use href="#dash"/></svg></div>
                <div class="item tool"><svg class="ic"><use href="#rect"/></svg><span class="dd"></span></div>
                <div class="item tool"><svg class="ic"><use href="#hatch"/></svg><span class="dd"></span></div>
            </div>
        </div>
        <div class="panel-label">Zeichnen<span class="dd"></span></div>
    </div>
    <div class="panel p-aendern">
        <div class="panel-body shift-up">
            <div class="col c-97">
                <div class="item"><svg class="ic"><use href="#move"/></svg>Verschieben</div>
                <div class="item"><svg class="ic"><use href="#copy"/></svg>Kopieren</div>
                <div class="item"><svg class="ic"><use href="#stretch"/></svg>Strecken</div>
            </div>
            <div class="col c-81">
                <div class="item"><svg class="ic"><use href="#rot"/></svg>Drehen</div>
                <div class="item"><svg class="ic"><use href="#mirror"/></svg>Spiegeln</div>
                <div class="item"><svg class="ic"><use href="#scl"/></svg>Skalieren</div>
            </div>
            <div class="col c-104">
                <div class="item"><svg class="ic"><use href="#trim"/></svg>Stutzen<span class="dd dd-far"></span></div>
                <div class="item"><svg class="ic"><use href="#fillet"/></svg>Abrunden<span class="dd dd-near"></span></div>
                <div class="item"><svg class="ic"><use href="#array"/></svg>Reihe<span class="dd"></span></div>
            </div>
            <div class="col">
                <div class="item tool"><svg class="ic"><use href="#erase"/></svg></div>
                <div class="item tool"><svg class="ic"><use href="#box3d"/></svg></div>
                <div class="item tool"><svg class="ic"><use href="#offset"/></svg></div>
            </div>
        </div>
        <div class="panel-label">Ändern<span class="dd"></span></div>
    </div>
    <div class="panel p-layer">
        <div class="panel-body">
            <div class="big layer-big">
                <svg class="big-ic layers-ic"><use href="#layers"/></svg>
                <span>Layer-<br>Eigenschaften</span>
            </div>
            <div class="layer-side">
                <div class="layer-combo">
                    <svg class="ic"><use href="#bulb"/></svg>
                    <svg class="ic"><use href="#sun"/></svg>
                    <svg class="ic"><use href="#unlock"/></svg>
                    <span class="swatch"></span>
                    <span class="layer-name">0</span>
                    <span class="dd"></span>
                </div>
                <div class="layer-row">
                    <svg class="ic"><use href="#lay1"/></svg>
                    <svg class="ic"><use href="#lay2"/></svg>
                    <svg class="ic"><use href="#lay3"/></svg>
                    <svg class="ic"><use href="#lay4"/></svg>
                    <svg class="ic"><use href="#lay5"/></svg>
                    <span>Als aktuell festlegen</span>
                </div>
                <div class="layer-row">
                    <svg class="ic"><use href="#lay6"/></svg>
                    <svg class="ic"><use href="#lay7"/></svg>
                    <svg class="ic"><use href="#lay8"/></svg>
                    <svg class="ic"><use href="#lay9"/></svg>
                    <svg class="ic"><use href="#lay10"/></svg>
                    <span>Layer anpassen</span>
                </div>
            </div>
        </div>
        <div class="panel-label">Layer<span class="dd"></span></div>
    </div>
    <div class="panel p-clip">
        <div class="panel-body">
            <div class="big clip-big">
                <svg class="big-ic paste-ic"><use href="#paste"/></svg>
                <span>Einfügen</span>
                <span class="dd dd-under"></span>
            </div>
            <div class="col">
                <div class="item tool"><svg class="ic"><use href="#cut"/></svg><span class="dd"></span></div>
                <div class="item tool"><svg class="ic"><use href="#pcopy"/></svg><span class="dd"></span></div>
                <div class="item tool"><svg class="ic"><use href="#pprop"/></svg></div>
            </div>
        </div>
        <div class="panel-label">Zwischenablage</div>
    </div>
</section>

<div class="docbar">
    <svg class="ic doc-menu"><use href="#menu"/></svg>
    <span class="slash"></span>
    <span class="doc-tab">Start</span>
    <span class="doc-tab current">Zeichnung1*<svg class="doc-x" viewBox="0 0 10 10"><path d="M1 1l8 8M9 1L1 9"/></svg></span>
    <svg class="ic doc-plus"><use href="#plus"/></svg>
    <span class="slash"></span>
</div>

<main class="main">
    <aside class="sidebar">
        <div class="palette">
            <div class="palette-head"><span class="grip"></span>PROJEKTBROWSER</div>
            <div class="palette-tools">
                <svg class="ic green-box"><use href="#greenbox"/></svg>
                <svg class="ic pal-tool"><use href="#mgr"/></svg>
                <svg class="ic pal-tool"><use href="#prop"/></svg>
                <svg class="ic pal-help"><use href="#help"/></svg>
            </div>
            <div class="view-select">Ansicht der aktiven Zeichnung<span class="dd"></span></div>
            <div class="tree">
                <div class="branch has-next">
                    <div class="row lvl0"><span class="exp minus"></span><svg class="ic"><use href="#doc"/></svg><b>Zeichnung1</b></div>
                    <div class="kids">
                        <div class="row lvl1"><span class="exp none"></span><svg class="ic"><use href="#punkte"/></svg>Punkte</div>
                        <div class="row lvl1"><span class="exp"></span><svg class="ic"><use href="#ptgroup"/></svg>Punktgruppen</div>
                        <div class="row lvl1"><span class="exp none"></span><svg class="ic"><use href="#dgm"/></svg>DGMs</div>
                        <div class="row lvl1"><span class="exp"></span><svg class="ic"><use href="#achse"/></svg>Achsen</div>
                        <div class="row lvl1"><span class="exp none"></span><svg class="ic"><use href="#ekante"/></svg>Elementkanten</div>
                        <div class="row lvl1"><span class="exp none"></span><svg class="ic"><use href="#gebiet"/></svg>Gebiete</div>
                        <div class="row lvl1"><span class="exp none"></span><svg class="ic"><use href="#einzug"/></svg>Einzugsgebiete</div>
                        <div class="row lvl1"><span class="exp none"></span><svg class="ic"><use href="#kanal"/></svg>Kanäle</div>
                        <div class="row lvl1"><span class="exp"></span><svg class="ic"><use href="#regen"/></svg>Regenwassersteuerungen</div>
                        <div class="row lvl1"><span class="exp"></span><svg class="ic"><use href="#netz"/></svg>Kanalnetze</div>
                        <div class="row lvl1"><span class="exp none"></span><svg class="ic"><use href="#netzdk"/></svg>Druckleitungsnetze</div>
                        <div class="row lvl1"><span class="exp none"></span><svg class="ic"><use href="#bruecke"/></svg>Brücken</div>
                        <div class="row lvl1"><span class="exp"></span><svg class="ic"><use href="#weiche"/></svg>Weichen und Gleisverbindungen</div>
                        <div class="row lvl1"><span class="exp none"></span><svg class="ic"><use href="#road"/></svg>3D-Profilkörper</div>
                        <div class="row lvl1"><span class="exp"></span><svg class="ic"><use href="#quers"/></svg>Querschnitte</div>
                        <div class="row lvl1"><span class="exp"></span><svg class="ic"><use href="#querb"/></svg>Querschnittsbestandteile</div>
                        <div class="row lvl1"><span class="exp none"></span><svg class="ic"><use href="#knoten"/></svg>Knotenpunkte</div>
                        <div class="row lvl1"><span class="exp"></span><svg class="ic"><use href="#survey"/></svg>Vermessung</div>
                        <div class="row lvl1"><span class="exp none"></span><svg class="ic"><use href="#plan"/></svg>Planrahmen-Gruppen</div>
                    </div>
                </div>
                <div class="branch">
                    <div class="row lvl0"><span class="exp minus"></span><svg class="ic"><use href="#db"/></svg>Datenverknüpfungen []</div>
                    <div class="kids">
                        <div class="row lvl1"><span class="exp none"></span><span class="linked"><svg class="ic"><use href="#dgm"/></svg><svg class="ic badge"><use href="#lk"/></svg></span>DGMs</div>
                        <div class="row lvl1"><span class="exp"></span><span class="linked"><svg class="ic"><use href="#achse"/></svg><svg class="ic badge"><use href="#lk"/></svg></span>Achsen</div>
                        <div class="row lvl1"><span class="exp none"></span><span class="linked"><svg class="ic"><use href="#becken"/></svg><svg class="ic badge"><use href="#lk"/></svg></span>Becken</div>
                        <div class="row lvl1"><span class="exp none"></span><span class="linked"><svg class="ic"><use href="#netz"/></svg><svg class="ic badge"><use href="#lk"/></svg></span>Kanalnetze</div>
                        <div class="row lvl1"><span class="exp none"></span><span class="linked"><svg class="ic"><use href="#netzdk"/></svg><svg class="ic badge"><use href="#lk"/></svg></span>Druckleitungsnetze</div>
                        <div class="row lvl1"><span class="exp none"></span><span class="linked"><svg class="ic"><use href="#road"/></svg><svg class="ic badge"><use href="#lk"/></svg></span>3D-Profilkörper</div>
                        <div class="row lvl1"><span class="exp none"></span><span class="linked"><svg class="ic"><use href="#plan"/></svg><svg class="ic badge"><use href="#lk"/></svg></span>Planrahmen-Gruppen</div>
                    </div>
                </div>
            </div>
            <div class="preview"></div>
        </div>
        <div class="vtabs">
            <span class="vtab active">Übersicht</span>
            <span class="vtab">Einstellungen</span>
            <span class="vtab">Vermessung</span>
            <span class="vtab">Werkzeugkasten</span>
        </div>
    </aside>

    <div class="workarea">
        <div class="work-top">
            <div class="canvas">
                <div class="view-label">[−][Oben][2D-Drahtkörper]</div>
                <div class="vp-btns">
                    <span class="vp-min"></span>
                    <span class="vp-max"></span>
                    <span class="vp-close">×</span>
                </div>

                <div class="viewcube">
                    <span class="vc-ring"></span>
                    <span class="vc-face"><span>OBEN</span></span>
                    <span class="vc-dir vc-n">N</span>
                    <span class="vc-dir vc-s">S</span>
                    <span class="vc-dir vc-w">W</span>
                    <span class="vc-dir vc-o">O</span>
                </div>
                <div class="wks">WKS<span class="wks-arrow"></span></div>

                <div class="navbar">
                    <svg class="nav-ic" viewBox="0 0 32 230">
                        <path d="M6 24c0-8 8-12 20-12 4 12 2 34-10 38C8 46 6 36 6 24z"/>
                        <circle cx="16" cy="28" r="8"/>
                        <path d="M4 58h26M4 168h26"/>
                        <path d="M8 92V78M12 92V70M17 92V68M22 92V72M26 92V80M8 92c0 10 8 14 12 14s6-6 6-14"/>
                        <path d="M3 118l12 12M3 118h4M3 118v4M3 142l10-10M24 118l-8 8M24 118v4M24 118h-4"/>
                        <circle cx="20" cy="136" r="6"/>
                        <path d="M16 178v-20M12 156l4-5 4 5"/>
                        <ellipse cx="16" cy="166" rx="14" ry="7"/>
                        <path d="M6 176h7v6H6zM14 176h7v6h-7zM22 176h7v6h-7z"/>
                        <path d="M6 186h17v14H6zM12 189l6 4-6 4z"/>
                    </svg>
                </div>

                <span class="cross-h"></span>
                <span class="cross-v"></span>
                <span class="cross-box"></span>
                <svg class="ucs" viewBox="0 0 80 80">
                    <path d="M6 4v64M6 70h50"/>
                    <rect x="2" y="65" width="9" height="9"/>
                    <path d="M60 54l13 14M73 54L60 68"/>
                    <path d="M8 0l6 7 6-7M14 7v8"/>
                </svg>
            </div>
            <div class="rstrip">
                <div class="rbar">
                    <span class="rgrip"></span>
                    <svg class="ic-18"><use href="#tbpoly"/></svg>
                    <svg class="ic-18"><use href="#tbtri"/></svg>
                    <svg class="ic-18"><use href="#tbarc"/></svg>
                    <svg class="ic-18"><use href="#tbang"/></svg>
                    <svg class="ic-18"><use href="#tbtable"/></svg>
                    <svg class="ic-18"><use href="#globe"/></svg>
                    <svg class="ic-18"><use href="#globe2"/></svg>
                    <svg class="ic-18"><use href="#pthash"/></svg>
                    <svg class="ic-18"><use href="#pta"/></svg>
                    <svg class="ic-18"><use href="#ptcur"/></svg>
                    <svg class="ic-18"><use href="#ptzoom"/></svg>
                    <svg class="ic-18"><use href="#tbarrow"/></svg>
                    <svg class="ic-18"><use href="#tbalign"/></svg>
                    <span class="rsep"></span>
                    <svg class="ic-18"><use href="#tbcurs"/></svg>
                    <span class="rsep"></span>
                    <svg class="ic-18"><use href="#tbalign2"/></svg>
                    <svg class="ic-18"><use href="#tbtin"/></svg>
                    <svg class="ic-18"><use href="#tbpt2"/></svg>
                    <span class="rsep"></span>
                    <svg class="ic-18"><use href="#tbbox"/></svg>
                    <svg class="ic-18"><use href="#tbdiag"/></svg>
                    <svg class="ic-18"><use href="#tbdiag2"/></svg>
                    <svg class="ic-18"><use href="#tbdim"/></svg>
                    <svg class="ic-18"><use href="#tbclock"/></svg>
                    <svg class="ic-18"><use href="#tbpen"/></svg>
                    <svg class="ic-18"><use href="#tbcalc"/></svg>
                </div>
                <div class="rbar rbar-two">
                    <span class="rgrip"></span>
                    <svg class="ic-18"><use href="#ptcur"/></svg>
                    <svg class="ic-18"><use href="#tbfilter"/></svg>
                    <svg class="ic-18"><use href="#pthash"/></svg>
                </div>
            </div>
        </div>

        <div class="cmd">
            <div class="cmd-gutter">
                <span class="rgrip"></span>
                <span class="cmd-x">✕</span>
                <svg class="ic"><use href="#wrench"/></svg>
            </div>
            <div class="cmd-main">
                <div class="cmd-log">Befehl: _WSCURRENT
Neuen Wert für WSCURRENT eingeben &lt;"Planung und Analyse"&gt;: Civil 3D
Befehl:
Befehl: Entgegengesetzte Ecke angeben oder [Zaun/FPolygon/KPolygon]:
Befehl: Entgegengesetzte Ecke angeben oder [Zaun/FPolygon/KPolygon]:</div>
                <div class="cmd-input"><svg class="ic"><use href="#term"/></svg><span class="dd"></span><em>Befehl eingeben</em></div>
            </div>
        </div>
    </div>
</main>

<footer class="status">
    <svg class="ic st-menu"><use href="#menu"/></svg>
    <span class="st-tab model">Modell</span>
    <span class="st-tab">Layout1</span>
    <svg class="ic st-plus"><use href="#plus"/></svg>

    <div class="sb-right">
        <div class="sb-g g-model"><span class="sb-text">MODELL</span></div>
        <div class="sb-g g-snap">
            <span class="sb"><svg class="ic"><use href="#grid"/></svg></span>
            <span class="sb"><svg class="ic"><use href="#snapg"/></svg></span>
            <span class="dd"></span>
            <span class="sb on"><svg class="ic"><use href="#ortho"/></svg></span>
            <span class="sb"><svg class="ic"><use href="#polar"/></svg></span>
            <span class="sb"><svg class="ic"><use href="#rot"/></svg></span>
            <span class="dd"></span>
            <span class="sb"><svg class="ic"><use href="#iso"/></svg></span>
            <span class="dd"></span>
        </div>
        <div class="sb-g g-62">
            <span class="sb on"><svg class="ic"><use href="#osnap"/></svg></span>
            <span class="sb on"><svg class="ic"><use href="#otrack"/></svg></span>
            <span class="dd"></span>
        </div>
        <div class="sb-g g-75">
            <span class="sb on"><svg class="ic"><use href="#lweight"/></svg></span>
            <span class="sb on"><svg class="ic"><use href="#transp"/></svg></span>
            <span class="sb on"><svg class="ic"><use href="#selc"/></svg></span>
        </div>
        <div class="sb-g g-127">
            <span class="sb on"><svg class="ic"><use href="#anno"/></svg></span>
            <span class="sb"><svg class="ic"><use href="#anno2"/></svg></span>
            <span class="sb"><svg class="ic"><use href="#anno3"/></svg></span>
            <span class="sb-text">1:1000</span>
            <span class="dd"></span>
        </div>
        <div class="sb-g g-40">
            <span class="sb"><svg class="ic"><use href="#gearf"/></svg></span>
            <span class="dd"></span>
        </div>
        <div class="sb-g g-25"><span class="sb"><svg class="ic"><use href="#plus"/></svg></span></div>
        <div class="sb-g g-25"><span class="sb"><svg class="ic"><use href="#shapes"/></svg></span></div>
        <div class="sb-g g-26"><span class="sb on"><svg class="ic"><use href="#dial"/></svg></span></div>
        <div class="sb-g g-51">
            <span class="sb"><svg class="ic"><use href="#isoplane"/></svg></span>
            <span class="sb-text">1,4</span>
        </div>
        <div class="sb-g g-67">
            <span class="sb"><svg class="ic"><use href="#tagf"/></svg></span>
            <span class="dd"></span>
            <span class="sb on"><svg class="ic"><use href="#tagd"/></svg></span>
        </div>
        <div class="sb-g g-23"><span class="sb"><svg class="ic"><use href="#full"/></svg></span></div>
        <div class="sb-g g-25"><span class="sb"><svg class="ic"><use href="#menu"/></svg></span></div>
    </div>
</footer>

<div class="popup">
    <div class="popup-title">Layout1</div>
    <div class="popup-thumb">
        <div class="sheet"><span class="sheet-line"></span><span class="sheet-marks"></span></div>
        <div class="sheet-stamp"></div>
    </div>
</div>
<div class="red-frame"></div>
</body>
</html>
```

FILE: styles.css
```css
* {
    box-sizing: border-box;
}
html, body {
    margin: 0;
    height: 100%;
}
body {
    position: relative;
    display: flex;
    flex-direction: column;
    height: 1391px;
    overflow: hidden;
    background: #d9d9d9;
    color: #333;
    font-family: "Open Sans", "Noto Sans", sans-serif;
    font-size: 11.4px;
    line-height: 15px;
}
.sprite {
    display: none;
}
.ic {
    width: 16px;
    height: 16px;
    flex: none;
    fill: none;
    stroke: #555;
    stroke-width: 1;
}
.ic-18 {
    width: 18px;
    height: 18px;
    flex: none;
    fill: none;
    stroke: #555;
    stroke-width: 1;
}
.dd {
    flex: none;
    width: 0;
    height: 0;
    margin-left: 6px;
    border-top: 4px solid #777;
    border-left: 3px solid transparent;
    border-right: 3px solid transparent;
}

/* title bar */
.titlebar {
    position: relative;
    display: flex;
    align-items: center;
    height: 32px;
    flex: none;
    padding: 0 0 4px 15px;
}
.app-btn {
    width: 24px;
    height: 21px;
    background: #8a2a72;
    border-right: 3px solid #3d2034;
    border-bottom: 2px solid #5d1c4e;
    color: #fff;
    font-weight: 700;
    font-size: 14px;
    line-height: 19px;
    text-align: center;
}
.dd-app {
    margin-left: 3px;
}
.qat {
    display: flex;
    align-items: center;
    gap: 8px;
    margin-left: 13px;
}
.qat .dd {
    margin-left: -4px;
}
.qat .dd-dim {
    border-top-color: #bbb;
}
.workspace {
    display: flex;
    align-items: center;
    width: 179px;
    height: 21px;
    margin-left: 8px;
    padding: 0 3px 0 4px;
    background: #fff;
    border: 1px solid #bbb;
    font-size: 12px;
}
.workspace .ic {
    stroke-width: .8;
}
.workspace-name {
    flex: 1;
    margin-left: 3px;
}
.dd-menu {
    margin-left: 6px;
}
.share-ic {
    margin-left: 9px;
}
.share {
    margin-left: 6px;
    color: #4a9ae0;
    font-size: 12px;
}
.doc-title {
    flex: 1;
    text-align: center;
    font-size: 12px;
}
.arrow-right {
    width: 0;
    height: 0;
    margin-right: 5px;
    border-left: 4px solid #555;
    border-top: 3px solid transparent;
    border-bottom: 3px solid transparent;
}
.search {
    width: 179px;
    height: 21px;
    padding-left: 3px;
    background: #fff;
    border: 1px solid #bbb;
    color: #666;
    font-style: italic;
    line-height: 19px;
    white-space: nowrap;
}
.search-ic {
    margin-left: 5px;
}
.cart-ic {
    margin-left: 132px;
    margin-right: 8px;
}
.title-sep {
    width: 1px;
    height: 22px;
    margin: 0 8px 0 12px;
    background: #f2f2f2;
}
.win-btns {
    display: flex;
    gap: 33px;
    margin-left: 83px;
    margin-right: 15px;
}
.ic-win {
    width: 12px;
    height: 12px;
    fill: none;
    stroke: #333;
}
.remote-bar {
    position: absolute;
    top: 0;
    left: 1221px;
    width: 118px;
    height: 15px;
    display: flex;
    align-items: center;
    justify-content: space-between;
    padding: 0 4px;
    background: #222;
    border-radius: 0 0 5px 5px;
}
.remote-dots {
    width: 26px;
    height: 8px;
    background-image: radial-gradient(#ddd 1px, transparent 1.2px);
    background-size: 5px 4px;
}
.remote-chev {
    width: 16px;
    height: 8px;
    fill: none;
    stroke: #eee;
    stroke-width: 1.5;
}

/* ribbon tabs */
.tabs {
    display: flex;
    align-items: stretch;
    flex: none;
    height: 20px;
    padding-left: 3px;
    font-size: 11.25px;
    white-space: nowrap;
}
.tab {
    padding: 0 10px;
    line-height: 20px;
}
.tab.active {
    background: #f5f5f5;
}
.tab-min {
    width: 15px;
    height: 10px;
    margin: 5px 0 0 20px;
    border: 1px solid #444;
    text-align: center;
    line-height: 4px;
}
.tab-min i {
    display: inline-block;
    border-bottom: 3px solid #444;
    border-left: 3px solid transparent;
    border-right: 3px solid transparent;
}
.tabs .dd {
    align-self: center;
    margin-left: 3px;
}

/* ribbon */
.ribbon {
    display: flex;
    flex: none;
    height: 99px;
    background: #f5f5f5;
}
.panel {
    display: flex;
    flex-direction: column;
    flex: none;
    border-right: 1px solid #d9d9d9;
    margin: 1px 0;
}
.panel-body {
    display: flex;
    flex: 1;
    padding-top: 4px;
}
.panel-label {
    display: flex;
    align-items: center;
    justify-content: center;
    height: 20px;
    color: #333;
    white-space: nowrap;
}
.p-paletten { width: 103px; }
.p-entdecken { width: 66px; }
.p-optimieren { width: 80px; }
.p-gelaende { width: 145px; }
.p-entwurf { width: 530px; }
.p-hoehe { width: 173px; }
.p-zeichnen { width: 118px; }
.p-aendern { width: 318px; }
.p-layer { width: 316px; }
.p-clip { width: 101px; border-right: 0; }
.p-gelaende .panel-body { padding-left: 24px; }
.p-entwurf .panel-body { padding-left: 8px; }
.p-hoehe .panel-body { padding-left: 28px; }
.p-zeichnen .panel-body { padding-left: 8px; }
.p-aendern .panel-body { padding-left: 9px; }
.c-120 { width: 120px; }
.c-123 { width: 123px; }
.c-117 { width: 117px; }
.c-37 { width: 37px; }
.c-39 { width: 39px; }
.c-97 { width: 97px; }
.c-81 { width: 81px; }
.c-104 { width: 104px; }
.item {
    display: flex;
    align-items: center;
    height: 24px;
    white-space: nowrap;
}
.item .ic {
    margin-right: 6px;
}
.item.tool .ic {
    margin-right: 0;
}
.panel-body.shift-up {
    padding-top: 3px;
}
.dd-far {
    margin-left: 12px;
}
.dd-near {
    margin-left: 9px;
}
.big {
    display: flex;
    flex-direction: column;
    align-items: center;
    text-align: center;
    white-space: nowrap;
}
.big-ic {
    display: block;
    flex: none;
    fill: none;
    stroke: #555;
}
.big-full {
    width: 100%;
}
.big-on {
    width: 48px;
    height: 72px;
    margin: 0 1px 0 4px;
    background: #dde8f3;
    border: 1px solid #4a9ad9;
}
.hammer-ic {
    width: 36px;
    height: 36px;
    margin: 1px 0 2px;
}
.explorer-ic {
    width: 30px;
    height: 30px;
    margin: 3px 0 5px;
}
.grading-ic {
    width: 32px;
    height: 20px;
    margin: 10px 0 8px;
}
.pal-grid {
    display: grid;
    grid-template-columns: 24px 24px;
    grid-auto-rows: 24px;
    margin-top: 1px;
}
.pal {
    display: flex;
    align-items: center;
    justify-content: center;
}
.pal.on {
    background: #dde8f3;
    border: 1px solid #4a9ad9;
}
.layer-big {
    width: 84px;
}
.layers-ic {
    width: 36px;
    height: 34px;
    margin: 2px 0 2px;
}
.layer-side {
    display: flex;
    flex-direction: column;
}
.layer-combo {
    display: flex;
    align-items: center;
    width: 207px;
    height: 22px;
    margin-top: 1px;
    margin-bottom: 2px;
    padding: 0 5px 0 6px;
    background: #fff;
    border: 1px solid #d4d4d4;
    gap: 3px;
}
.swatch {
    width: 14px;
    height: 16px;
    margin-left: 3px;
    background: #000;
    border: 1px solid #777;
}
.layer-name {
    flex: 1;
    margin-left: 3px;
    font-size: 12px;
}
.layer-row {
    display: flex;
    align-items: center;
    height: 24px;
    padding-left: 4px;
    gap: 8px;
}
.layer-row span {
    margin-left: -3px;
}
.clip-big {
    width: 77px;
}
.paste-ic {
    width: 26px;
    height: 32px;
    margin: 3px 0 3px;
}
.dd-under {
    margin: 4px 0 0;
}

/* doc tabs */
.docbar {
    display: flex;
    align-items: center;
    flex: none;
    height: 27px;
    padding-left: 16px;
}
.slash {
    width: 1px;
    height: 20px;
    margin: 0 6px;
    background: #b5b5b5;
    transform: skewX(-20deg);
}
.doc-tab {
    display: flex;
    align-items: center;
    height: 27px;
    padding: 0 12px;
}
.doc-tab:first-of-type {
    padding: 0 14px 0 3px;
}
.doc-tab.current {
    width: 106px;
    padding-right: 8px;
    background: #f5f5f5;
    font-weight: 700;
    clip-path: polygon(7px 0, 100% 0, calc(100% - 7px) 100%, 0 100%);
}
.doc-x {
    width: 9px;
    height: 9px;
    margin-left: auto;
    fill: none;
    stroke: #555;
    stroke-width: 1.5;
}
.doc-menu {
    width: 16px;
}
.doc-plus {
    margin-left: 11px;
}

/* main */
.main {
    display: flex;
    flex: 1;
    min-height: 0;
    background: #f5f5f5;
}
.sidebar {
    display: flex;
    flex: none;
    width: 483px;
    padding: 6px 0 10px;
}
.palette {
    display: flex;
    flex-direction: column;
    width: 458px;
}
.palette-head {
    display: flex;
    align-items: center;
    height: 20px;
    padding-bottom: 2px;
    background: #d9d9d9;
    border-radius: 4px 4px 0 0;
    color: #444;
}
.grip {
    width: 4px;
    height: 12px;
    margin: 0 5px 0 6px;
    background-image: radial-gradient(#888 .7px, transparent 1px);
    background-size: 2px 2px;
}
.palette-tools {
    display: flex;
    align-items: center;
    height: 32px;
    padding: 0 5px 3px;
}
.green-box {
    margin-right: auto;
}
.pal-tool {
    margin-right: 11px;
    stroke: #aaa;
}
.pal-help {
    stroke: #666;
}
.view-select {
    display: flex;
    align-items: center;
    justify-content: space-between;
    height: 21px;
    margin: 0 1px;
    padding: 0 3px;
    background: #fff;
    border: 1px solid #d8d8d8;
    color: #444;
}
.view-select .dd {
    border-top-color: #555;
}
.tree {
    flex: none;
    height: 748px;
    margin-top: 3px;
    padding-top: 1px;
    background: #fff;
    border: 1px solid #8d8d8d;
    color: #222;
}
.preview {
    flex: 1;
    margin-top: 9px;
    border: 1px solid #a8a8a8;
}
.branch {
    position: relative;
}
.branch.has-next::before {
    content: "";
    position: absolute;
    left: 13px;
    top: 10px;
    bottom: -10px;
    border-left: 1px dotted #777;
}
.row {
    display: flex;
    align-items: center;
    height: 20px;
    white-space: nowrap;
}
.row.lvl0 {
    padding-left: 9px;
}
.row.lvl0 .ic {
    margin-right: 7px;
}
.row.lvl1 {
    position: relative;
    padding-left: 28px;
}
.row.lvl1 .ic {
    margin-right: 7px;
}
.row.lvl1::before {
    content: "";
    position: absolute;
    left: 32px;
    top: 0;
    bottom: 0;
    border-left: 1px dotted #777;
}
.row.lvl1::after {
    content: "";
    position: absolute;
    left: 33px;
    top: 10px;
    width: 9px;
    border-top: 1px dotted #777;
}
.row.lvl1:last-child::before {
    bottom: 10px;
}
.exp {
    position: relative;
    z-index: 1;
    flex: none;
    width: 9px;
    height: 9px;
    margin-right: 7px;
    background: linear-gradient(#4a7fb0, #4a7fb0) center / 5px 1px no-repeat, linear-gradient(#4a7fb0, #4a7fb0) center / 1px 5px no-repeat, #f2f2f2;
    border: 1px solid #9a9a9a;
}
.exp.minus {
    background: linear-gradient(#4a7fb0, #4a7fb0) center / 5px 1px no-repeat, #f2f2f2;
}
.exp.none {
    background: none;
    border: 0;
}
.row b {
    color: #111;
}
.linked {
    position: relative;
    display: flex;
}
.linked .badge {
    position: absolute;
    left: 0;
    top: 0;
    stroke: #555;
}
.vtabs {
    display: flex;
    flex-direction: column;
    width: 20px;
    padding-top: 22px;
}
.vtab {
    display: flex;
    align-items: center;
    justify-content: center;
    height: 121px;
    flex: none;
    background: #d3d3d3;
    border: 1px solid #bdbdbd;
    border-left: 0;
    border-radius: 0 4px 4px 0;
    color: #777;
    font-size: 11.5px;
    writing-mode: sideways-lr;
}
.vtab.active {
    background: #f5f5f5;
    color: #333;
}

/* drawing area */
.workarea {
    display: flex;
    flex-direction: column;
    flex: 1;
    min-width: 0;
    padding: 4px 0 5px;
}
.work-top {
    display: flex;
    flex: 1;
    min-height: 0;
}
.canvas {
    position: relative;
    flex: 1;
    background: #fff;
}
.view-label {
    position: absolute;
    left: 4px;
    top: 6px;
    color: #222;
}
.vp-btns {
    position: absolute;
    top: 9px;
    right: 10px;
    display: flex;
    gap: 8px;
}
.vp-btns span {
    width: 12px;
    height: 12px;
    color: #444;
    font-weight: 700;
    line-height: 11px;
    text-align: center;
}
.vp-btns .vp-min {
    height: 5px;
    margin-top: 5px;
    background: #e6e6e6;
    border: 1px solid #888;
}
.vp-max {
    background: #e6e6e6;
    border: 1px solid #888;
    box-shadow: inset 0 0 0 2px #e6e6e6, inset 0 0 0 3px #888;
}
.vp-close {
    background: #e0e0e0;
    border-radius: 2px;
    font-size: 14px;
}
.viewcube {
    position: absolute;
    left: 1889px;
    top: 34px;
    width: 146px;
    height: 150px;
}
.vc-ring {
    position: absolute;
    left: 13px;
    top: 12px;
    width: 120px;
    height: 120px;
    border: 12px solid #fafafa;
    border-radius: 50%;
}
.vc-face {
    position: absolute;
    left: 47px;
    top: 46px;
    display: flex;
    align-items: center;
    justify-content: center;
    width: 52px;
    height: 52px;
    background: #eee;
    border: 1px solid #8c8c8c;
}
.vc-face span {
    width: 32px;
    background: #e3e3e5;
    color: #8e8e8e;
    font-weight: 700;
    font-size: 11px;
    line-height: 32px;
    text-align: center;
}
.vc-dir {
    position: absolute;
    width: 24px;
    color: #e2e2e2;
    font-weight: 700;
    font-size: 22px;
    line-height: 20px;
    text-align: center;
    -webkit-text-stroke: 1px #c8c8c8;
}
.vc-n { left: 61px; top: 6px; }
.vc-s { left: 61px; top: 119px; }
.vc-w { left: 5px; top: 62px; }
.vc-o { left: 117px; top: 62px; }
.wks {
    position: absolute;
    left: 1939px;
    top: 194px;
    display: flex;
    align-items: center;
    gap: 5px;
    height: 16px;
    padding: 0 6px;
    background: #eeeef6;
    border-radius: 4px;
    color: #aaa;
    font-size: 10px;
}
.wks-arrow {
    width: 0;
    height: 0;
    border-top: 5px solid #ccc;
    border-left: 4px solid transparent;
    border-right: 4px solid transparent;
}
.navbar {
    position: absolute;
    left: 2007px;
    top: 235px;
    width: 36px;
    height: 215px;
    background: #f6f6f6;
    border: 2px solid #d2d2d2;
    border-radius: 7px;
}
.nav-ic {
    display: block;
    width: 32px;
    height: 211px;
    fill: none;
    stroke: #e0e0e0;
    stroke-width: 1.5;
}
.cross-h {
    position: absolute;
    left: 0;
    top: 934px;
    width: 109px;
    height: 1px;
    background: #222;
}
.cross-v {
    position: absolute;
    left: 44px;
    top: 870px;
    width: 1px;
    height: 129px;
    background: #222;
}
.cross-box {
    position: absolute;
    left: 41px;
    top: 931px;
    width: 7px;
    height: 7px;
    background: #fff;
    border: 1px solid #222;
}
.ucs {
    position: absolute;
    left: 20px;
    top: 977px;
    width: 80px;
    height: 80px;
    fill: none;
    stroke: #222;
}

/* right toolbars */
.rstrip {
    flex: none;
    width: 31px;
    padding-left: 4px;
}
.rbar {
    display: flex;
    flex-direction: column;
    align-items: center;
    width: 24px;
    gap: 4px;
    padding: 1px 0;
    border: 1px solid #b5b5b5;
}
.rbar-two {
    margin-top: 2px;
}
.rgrip {
    width: 14px;
    height: 4px;
    background-image: radial-gradient(#aaa .6px, transparent .9px);
    background-size: 2px 2px;
}
.rsep {
    width: 20px;
    height: 1px;
    margin-top: 1px;
    background: #bbb;
}

/* command line */
.cmd {
    display: flex;
    flex: none;
    height: 101px;
    margin-top: 4px;
    background: #e4e4e4;
}
.cmd-gutter {
    display: flex;
    flex-direction: column;
    align-items: center;
    width: 25px;
    padding-top: 5px;
    gap: 6px;
}
.cmd-x {
    color: #666;
    font-size: 13px;
    font-weight: 700;
    line-height: 14px;
}
.cmd-main {
    display: flex;
    flex-direction: column;
    flex: 1;
}
.cmd-log {
    flex: 1;
    padding: 2px 0 0 2px;
    background: #c8c8c8;
    color: #111;
    font-family: "Liberation Mono", monospace;
    font-size: 11.66px;
    line-height: 15px;
    white-space: pre;
}
.cmd-input {
    display: flex;
    align-items: center;
    height: 21px;
    padding-left: 4px;
    background: #fff;
    border-top: 1px solid #aaa;
    border-bottom: 1px solid #ddd;
}
.cmd-input .dd {
    margin-left: 3px;
}
.cmd-input em {
    margin-left: 7px;
    color: #777;
    font-family: "Liberation Mono", monospace;
    font-size: 11.66px;
}

/* status bar */
.status {
    display: flex;
    align-items: center;
    flex: none;
    height: 28px;
}
.st-menu {
    margin-left: 15px;
}
.st-tab {
    display: flex;
    align-items: center;
    justify-content: center;
    width: 65px;
    height: 23px;
    margin-bottom: 4px;
    background: #e6e6e6;
}
.st-tab.model {
    margin-left: 13px;
    background: #f5f5f5;
    font-weight: 700;
    clip-path: polygon(7px 0, 100% 0, calc(100% - 7px) 100%, 0 100%);
}
.st-plus {
    margin-left: 13px;
}
.sb-right {
    display: flex;
    align-items: center;
    gap: 2px;
    margin-left: auto;
}
.sb-g {
    display: flex;
    align-items: center;
    height: 24px;
    padding: 0 2px;
    background: #f5f5f5;
    gap: 3px;
}
.sb-g .dd {
    margin-left: 2px;
    margin-right: 2px;
}
.g-model { width: 60px; justify-content: center; }
.g-snap { width: 194px; justify-content: space-between; }
.g-62 { width: 62px; padding-left: 1px; }
.g-75 { width: 75px; padding-left: 1px; }
.g-127 { width: 127px; padding-left: 1px; }
.g-40 { width: 40px; }
.g-25 { width: 25px; }
.g-26 { width: 26px; }
.g-23 { width: 23px; }
.g-51 { width: 51px; }
.g-67 { width: 67px; }
.sb {
    display: flex;
    align-items: center;
    justify-content: center;
    width: 21px;
    height: 22px;
    flex: none;
}
.sb.on {
    background: #cfe2f8;
    border: 1px solid #5b7da3;
}
.sb-text {
    margin: 0 3px;
    color: #333;
    white-space: nowrap;
}

/* layout preview popup */
.popup {
    position: absolute;
    left: 63px;
    top: 1222px;
    width: 151px;
    height: 136px;
    padding: 0 8px;
    background: #e4e4e4;
    border: 1px solid #b0b0b0;
}
.popup::after {
    content: "";
    position: absolute;
    left: 72px;
    bottom: -5px;
    width: 8px;
    height: 8px;
    background: #e4e4e4;
    border-right: 1px solid #b0b0b0;
    border-bottom: 1px solid #b0b0b0;
    transform: rotate(45deg);
}
.popup-title {
    height: 29px;
    padding-bottom: 2px;
    line-height: 27px;
    text-align: center;
}
.popup-thumb {
    position: relative;
    height: 98px;
    background: #fff;
    border: 1px solid #aaa;
}
.sheet {
    position: absolute;
    left: 28px;
    top: 19px;
    width: 83px;
    height: 59px;
    border: 1px solid #000;
    border-left: 3px solid #000;
}
.sheet-line {
    display: block;
    width: 1px;
    height: 100%;
    margin-left: 53px;
    background: #bbb;
}
.sheet-marks {
    position: absolute;
    right: 3px;
    bottom: 10px;
    width: 22px;
    height: 3px;
    background: linear-gradient(90deg, #222 0 3px, transparent 3px 7px, #222 7px 11px, transparent 11px 18px, #222 18px);
}
.sheet-stamp {
    position: absolute;
    left: 57px;
    top: 79px;
    width: 18px;
    height: 3px;
    background: linear-gradient(90deg, #222 0 8px, transparent 8px 11px, #f2d23c 11px);
}
.red-frame {
    position: absolute;
    left: 2px;
    top: 1217px;
    width: 217px;
    height: 173px;
    border: 4px solid #e5482b;
    pointer-events: none;
}
```
